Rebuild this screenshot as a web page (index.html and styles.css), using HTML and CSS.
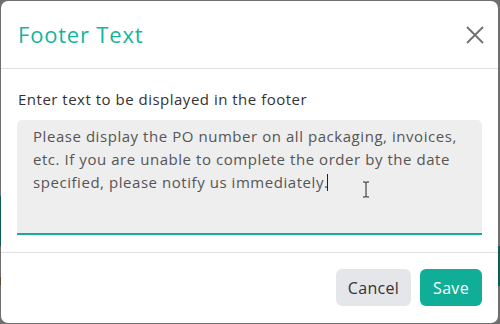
FILE: index.html
```html
<!DOCTYPE html>
<html>
<head>
<meta charset="utf-8">
<link rel="stylesheet" href="styles.css">
</head>
<body>
<div class="backdrop">
  <div class="modal">
    <div class="modal-header">
      <h2 class="modal-title">Footer Text</h2>
      <button class="close-btn" aria-label="Close">
        <svg width="18" height="18" viewBox="0 0 18 18"><path d="M1 1L17 17M17 1L1 17" stroke="#707070" stroke-width="1.8" fill="none"/></svg>
      </button>
    </div>
    <div class="modal-body">
      <label class="field-label">Enter text to be displayed in the footer</label>
      <div class="textarea">Please display the PO number on all packaging, invoices, etc. If you are unable to complete the order by the date specified, please notify us immediately.<span class="caret"></span>
        <svg class="ibeam" width="8" height="17" viewBox="0 0 8 17"><path d="M1 1H3.2Q4 1 4 2V15Q4 16 3.2 16H1M7 1H4.8Q4 1 4 2M7 16H4.8Q4 16 4 15" stroke="#222" stroke-width="1" fill="none"/></svg>
      </div>
    </div>
    <div class="modal-footer">
      <button class="btn btn-cancel">Cancel</button>
      <button class="btn btn-save">Save</button>
    </div>
  </div>
</div>
</body>
</html>
```
FILE: styles.css
```css
html, body {
  margin: 0;
  padding: 0;
}
body {
  width: 500px;
  height: 324px;
  overflow: hidden;
  font-family: "Open Sans", "Noto Sans", sans-serif;
}
.backdrop {
  box-sizing: border-box;
  width: 500px;
  height: 324px;
  padding: 1px 2px 1px 1px;
  background:
    linear-gradient(#0d5b52, #0d5b52) 0 196px / 1px 50px no-repeat,
    linear-gradient(#5a4a30, #5a4a30) 0 277px / 1px 8px no-repeat,
    linear-gradient(#0d5b52, #0d5b52) 498px 246px / 2px 40px no-repeat,
    #6f6f6f;
}
.modal {
  height: 322px;
  background: #fff;
  border-radius: 7px;
  display: flex;
  flex-direction: column;
  overflow: hidden;
}
.modal-header {
  height: 68px;
  box-sizing: border-box;
  display: flex;
  align-items: center;
  justify-content: space-between;
  padding: 0 14px 0 17px;
  border-bottom: 1px solid #dedee4;
  flex-shrink: 0;
}
.modal-title {
  margin: 0 0 1px 0;
  font-size: 22px;
  font-weight: 400;
  color: #14b49d;
  letter-spacing: 0.8px;
}
.close-btn {
  border: 0;
  background: none;
  padding: 0;
  width: 18px;
  height: 18px;
  display: flex;
}
.modal-body {
  padding: 20px 16px 17px 16px;
  border-bottom: 1px solid #dedee4;
}
.field-label {
  display: block;
  font-size: 15px;
  line-height: 20px;
  color: #333;
  margin-bottom: 11px;
  padding-left: 1px;
  letter-spacing: 0.5px;
}
.textarea {
  position: relative;
  box-sizing: border-box;
  height: 115px;
  background: #eeeeee;
  border-radius: 5px 5px 0 0;
  border-bottom: 2px solid #16ad97;
  padding: 5px 16px 0 16px;
  font-size: 15px;
  line-height: 23px;
  color: #555;
  letter-spacing: 0.55px;
}
.caret {
  display: inline-block;
  width: 1px;
  height: 17px;
  background: #222;
  vertical-align: -3px;
  margin-left: -1px;
}
.ibeam {
  position: absolute;
  left: 345px;
  top: 61px;
}
.modal-footer {
  flex: 1;
  display: flex;
  justify-content: flex-end;
  align-items: flex-start;
  gap: 9px;
  padding: 16px 16px 0 0;
}
.btn {
  font-family: inherit;
  font-size: 16px;
  height: 37px;
  border: 0;
  border-radius: 6px;
  padding: 0;
  letter-spacing: 0.3px;
}
.btn-cancel {
  background: #e5e6ea;
  color: #333;
  width: 75px;
}
.btn-save {
  background: #10ae96;
  color: #fff;
  width: 62px;
}
```
